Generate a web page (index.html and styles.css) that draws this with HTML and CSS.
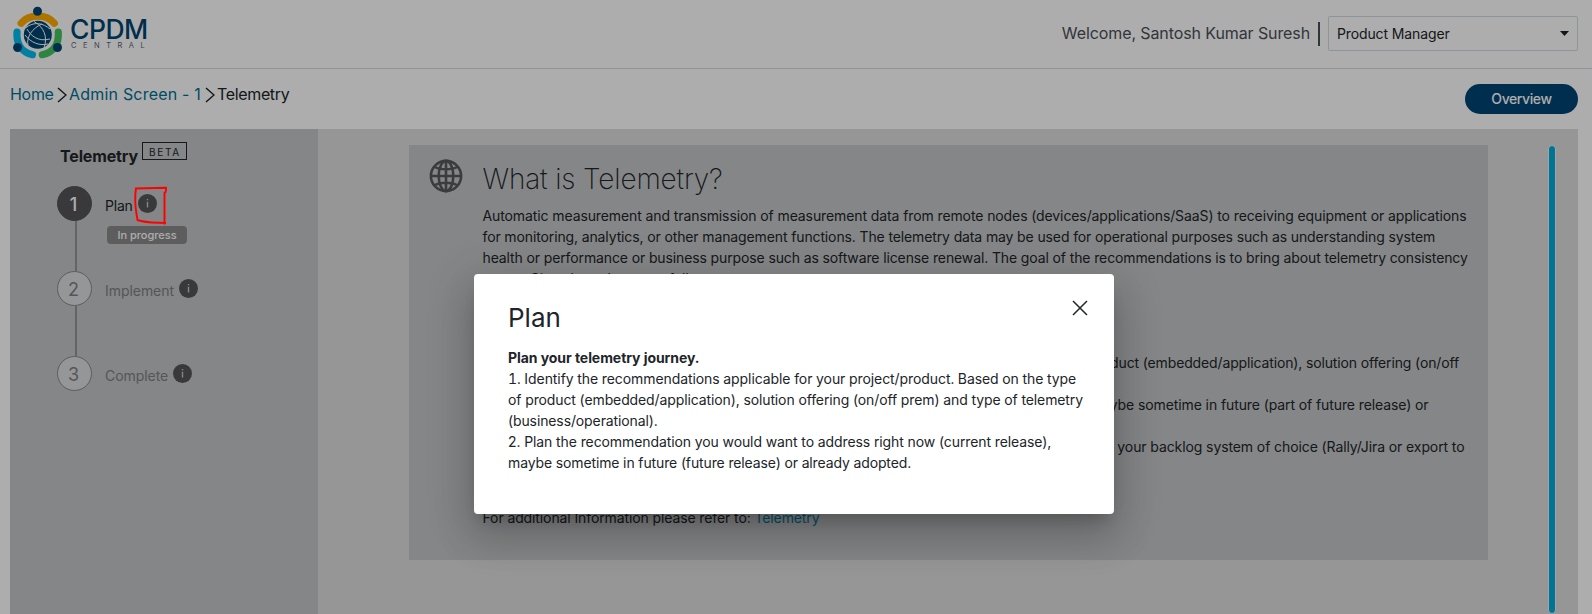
FILE: index.html
```
<!DOCTYPE html>
<html lang="en">
<head>
<meta charset="utf-8">
<title>CPDM Central - Telemetry</title>
<link rel="stylesheet" href="styles.css">
</head>
<body>
<header class="topbar">
  <div class="brand">
    <svg class="brand-mark" width="50" height="54" viewBox="0 0 50 54" fill="none">
      <g stroke-width="7.2" stroke-linecap="round">
        <path d="M8.2 17.2C16 7.8 33.500 7.8 41.300 17.2" stroke="#ffac00"/>
        <path d="M4 26.200C3.200 38.500 9 46.500 19.400 48.700" stroke="#00bff2"/>
        <path d="M45.300 26.200C46 38.500 40.500 46.500 29.300 48.700" stroke="#44c460"/>
      </g>
      <g fill="#004674">
        <circle cx="24.500" cy="5.200" r="4.500"/><circle cx="4.600" cy="41.500" r="4.500"/><circle cx="44.500" cy="41.500" r="4.500"/>
        <circle cx="24.800" cy="28.800" r="14"/>
      </g>
      <g stroke="#fff" stroke-width="1">
        <path d="M12.500 22C21 15 30 17 37 23M21 15.500C31 21 35 31 31 42M29 18C19 22 13 32 15 39M12 29C18 37 27 40 35 38M14 23C18 30 25 36 37 33"/>
      </g>
    </svg>
    <div class="brand-text">
      <span class="brand-name">CPDM</span>
      <span class="brand-sub">CENTRAL</span>
    </div>
  </div>
  <div class="account">
    <span class="welcome">Welcome, Santosh Kumar Suresh</span>
    <span class="divider"></span>
    <div class="select"><span>Product Manager</span>
      <svg width="9" height="5" viewBox="0 0 9 5"><path d="M0 0H9L4.500 5Z" fill="#1e2226"/></svg>
    </div>
  </div>
</header>

<div class="crumb-row">
  <nav class="crumbs">
    <a class="c-home">Home</a>
    <svg width="10" height="16" viewBox="0 0 10 16"><path d="M1 1L9 8L1 15" fill="none" stroke="#212529" stroke-width="1.500"/></svg>
    <a class="c-admin">Admin Screen - 1</a>
    <svg width="10" height="16" viewBox="0 0 10 16"><path d="M1 1L9 8L1 15" fill="none" stroke="#212529" stroke-width="1.500"/></svg>
    <span class="c-here">Telemetry</span>
  </nav>
  <button class="overview">Overview</button>
</div>

<div class="content">
  <aside class="sidebar">
    <div class="side-head"><span class="side-title">Telemetry</span><span class="beta">BETA</span></div>
    <div class="step active">
      <div class="rail"><span class="num">1</span><span class="link"></span></div>
      <div class="step-body">
        <div class="step-label"><span class="l-plan">Plan</span><svg class="info" width="19" height="19" viewBox="0 0 19 19"><circle cx="9.500" cy="9.500" r="9.500" fill="#555558"/><path d="M9.500 7.800V13.500M9.500 5V6.300" stroke="#c4c6c7" stroke-width="1.400"/></svg></div>
        <span class="pill">In progress</span>
      </div>
    </div>
    <div class="step">
      <div class="rail"><span class="num">2</span><span class="link"></span></div>
      <div class="step-body">
        <div class="step-label"><span class="l-impl">Implement</span><svg class="info" width="19" height="19" viewBox="0 0 19 19"><circle cx="9.500" cy="9.500" r="9.500" fill="#555558"/><path d="M9.500 7.800V13.500M9.500 5V6.300" stroke="#c4c6c7" stroke-width="1.400"/></svg></div>
      </div>
    </div>
    <div class="step">
      <div class="rail"><span class="num">3</span></div>
      <div class="step-body">
        <div class="step-label"><span class="l-comp">Complete</span><svg class="info" width="19" height="19" viewBox="0 0 19 19"><circle cx="9.500" cy="9.500" r="9.500" fill="#555558"/><path d="M9.500 7.800V13.500M9.500 5V6.300" stroke="#c4c6c7" stroke-width="1.400"/></svg></div>
      </div>
    </div>
  </aside>
  <main class="main">
    <section class="card">
      <svg class="globe" width="34" height="34" viewBox="0 0 34 34" fill="none" stroke="#58595c" stroke-width="2.600">
        <circle cx="17" cy="17" r="15.100"/><ellipse cx="17" cy="17" rx="7.300" ry="15.100"/>
        <path d="M17 1.500V32.500M1.500 17H32.500M5 7.500C11 11.200 23 11.200 29 7.500M5 26.500C11 22.800 23 22.800 29 26.500"/>
      </svg>
      <div class="article">
        <h1>What is Telemetry?</h1>
        <p>
          <span class="line t1">Automatic measurement and transmission of measurement data from remote nodes (devices/applications/SaaS) to receiving equipment or applications</span>
          <span class="line t2b">for monitoring, analytics, or other management functions. The telemetry data may be used for operational purposes such as understanding system</span>
          <span class="line t3">health or performance or business purpose such as software license renewal. The goal of the recommendations is to bring about telemetry consistency</span>
          <span class="line t2">across Cisco based apps as follows:</span>
        </p>
        <div class="steps-text">
          <span class="line end e1">1. Identify the recommendations applicable for your product. Based on the type of product (embedded/application), solution offering (on/off</span>
          <span class="line t2">prem) and type of telemetry (business/operational).</span>
          <span class="line end e2">2. Plan the recommendation to address right now (current release), maybe sometime in future (part of future release) or</span>
          <span class="line t2">already adopted.</span>
          <span class="line end e3">3. Implement the planned recommendations by adding them to your backlog system of choice (Rally/Jira or export to</span>
          <span class="line t2">a file).</span>
        </div>
        <div class="refer"><span class="line t2">For additional Information please refer to: <a>Telemetry</a></span></div>
      </div>
    </section>
    <div class="scrollbar"></div>
  </main>
</div>

<div class="backdrop">
  <div class="dialog" role="dialog">
    <div class="dialog-head">
      <h2>Plan</h2>
      <svg class="close" width="16" height="16" viewBox="0 0 16 16"><path d="M1 1L15 15M15 1L1 15" stroke="#212529" stroke-width="1.500"/></svg>
    </div>
    <div class="dialog-body">
      <span class="line d0">Plan your telemetry journey.</span>
      <span class="line d1">1. Identify the recommendations applicable for your project/product. Based on the type</span>
      <span class="line d2">of product (embedded/application), solution offering (on/off prem) and type of telemetry</span>
      <span class="line d2">(business/operational).</span>
      <span class="line d3">2. Plan the recommendation you would want to address right now (current release),</span>
      <span class="line d4">maybe sometime in future (future release) or already adopted.</span>
    </div>
  </div>
</div>
<svg class="marker" width="36" height="42" viewBox="0 0 36 42" fill="none" stroke="#ff0000" stroke-width="1.900"><path d="M2 4.500L33 3.700V7.500M3 4C1.500 14 2.500 24 3.500 30L4.500 36C12 39 22 38.500 33 39M33 7.500L31.500 9V40.500"/></svg>
</body>
</html>
```
FILE: styles.css
```
* { box-sizing: border-box; }
body {
  margin: 0;
  width: 1592px;
  height: 614px;
  overflow: hidden;
  position: relative;
  background: #fff;
  color: #212529;
  font: 400 14px/21px Inter, "Liberation Sans", sans-serif;
}
h1, h2, p { margin: 0; }

.topbar {
  height: 69px;
  border-bottom: 1px solid #d2dae1;
  display: flex;
  justify-content: space-between;
  padding: 0 14px 0 13px;
}
.brand { display: flex; gap: 7px; padding-top: 6px; }
.brand-text { display: flex; flex-direction: column; color: #004674; padding-top: 7px; }
.brand-name { font-size: 26.5px; font-weight: 450; line-height: 32px; letter-spacing: -0.5px; }
.brand-sub { font-size: 7.5px; line-height: 8px; letter-spacing: 6.5px; color: #5b6876; margin: -3px 0 0 1px; }
.account { display: flex; align-items: center; height: 67px; white-space: nowrap; }
.welcome { font-size: 16px; letter-spacing: -0.1px; color: #495057; }
.divider { width: 2px; height: 24px; background: #495057; margin: 0 8px; }
.select {
  width: 250px;
  height: 35px;
  border: 1px solid #d2dae1;
  border-radius: 2px;
  padding: 0 8px;
  display: flex;
  align-items: center;
  justify-content: space-between;
  letter-spacing: -0.12px;
}

.crumb-row {
  height: 60px;
  display: flex;
  justify-content: space-between;
  align-items: flex-start;
  padding: 15px 14px 0 10px;
}
.crumbs { display: flex; align-items: center; font-size: 16px; white-space: nowrap; }
.crumbs a { color: #007096; }
.crumbs svg { margin: 0 2px 0 3px; }
.c-home { letter-spacing: -0.3px; width: 44px; }
.c-admin { letter-spacing: 0.2px; width: 133px; }
.c-here { letter-spacing: -0.35px; }
.overview {
  width: 113px;
  height: 30px;
  border: 0;
  border-radius: 15px;
  background: #004574;
  color: #fff;
  font: 500 14px/30px Inter, sans-serif;
  letter-spacing: -0.4px;
  padding: 0;
}

.content { display: flex; height: 485px; margin: 0 14px 0 10px; }
.sidebar { width: 308px; background: #c4c6c7; padding: 13px 0 0 47px; }
.side-head { display: flex; align-items: flex-start; gap: 5px; height: 44px; padding-left: 3px; }
.side-title { font-size: 16px; font-weight: 700; letter-spacing: -0.15px; line-height: 28px; width: 77px; }
.beta {
  width: 45px;
  height: 18px;
  border: 1px solid #212529;
  font-size: 10px;
  line-height: 19px;
  letter-spacing: 1.7px;
  padding-left: 6px;
}
.step { display: flex; height: 85px; gap: 13px; color: #7d7f82; }
.rail { width: 35px; display: flex; flex-direction: column; align-items: center; }
.num {
  width: 35px;
  height: 35px;
  border: 1px solid #88898b;
  border-radius: 50%;
  background: #dcdddf;
  font-size: 18px;
  line-height: 35px;
  padding-right: 2px;
  text-align: center;
}
.link { width: 2px; height: 50px; margin-left: 2px; background: #929497; }
.step-body { padding-top: 5px; }
.step-label { display: flex; align-items: center; height: 27px; }
.step-label span { padding-top: 2px; }
.info { margin: -2px 0 0 6px; }
.l-plan { width: 27px; letter-spacing: -0.2px; }
.l-impl { width: 68px; letter-spacing: -0.05px; }
.l-comp { width: 62px; letter-spacing: -0.05px; }
.active { color: #212529; }
.active .num { background: #555558; border-color: #555558; color: #fff; font-weight: 500; }
.pill {
  display: block;
  width: 80px;
  height: 18px;
  margin: 8px 0 0 2px;
  border-radius: 4px;
  background: #8a8a8a;
  color: #fff;
  font-size: 11px;
  font-weight: 500;
  line-height: 18px;
  text-align: center;
}

.main { flex: 1; display: flex; background: #ddd; padding: 16px 22px 0 91px; justify-content: space-between; }
.card { width: 1079px; height: 415px; background: #c4c6c7; display: flex; padding: 14px 0 0 19.5px; }
.article { padding: 6px 0 0 20px; white-space: nowrap; }
h1 { font-size: 28px; font-weight: 200; line-height: 29px; letter-spacing: -0.14px; height: 40px; }
.line { display: block; white-space: nowrap; }
.t1 { letter-spacing: -0.102px; }
.t2 { letter-spacing: -0.108px; }
.t2b { letter-spacing: -0.125px; }
.t3 { letter-spacing: -0.12px; }
.steps-text { padding-top: 63px; }
.end { text-align: right; }
.e1 { width: 976.5px; letter-spacing: -0.14px; }
.e2 { width: 946px; letter-spacing: -0.1px; }
.e3 { width: 982px; letter-spacing: -0.1px; }
.refer { padding-top: 29px; }
.refer a { color: #0379a2; }
.scrollbar { width: 8px; height: 469px; background: #00abdb; border: 1px solid #f2f2f2; border-radius: 4px; }

/* Modal layer */
.backdrop { position: absolute; inset: 0; background: rgba(0, 0, 0, 0.32); display: flex; justify-content: center; padding-top: 274px; }
.dialog {
  width: 640px;
  height: 240px;
  margin-left: -4px;
  border-radius: 4px;
  background: #fff;
  padding: 26px 26px 0 34px;
  box-shadow: 0 11px 15px -7px rgba(0, 0, 0, 0.2), 0 24px 38px 3px rgba(0, 0, 0, 0.14), 0 9px 46px 8px rgba(0, 0, 0, 0.12);
}
.dialog-head { display: flex; justify-content: space-between; height: 47px; }
h2 { font-size: 26px; font-weight: 400; line-height: 35px; }
.d0 { font-weight: 700; letter-spacing: -0.06px; }
.d1 { letter-spacing: -0.075px; font-variant-numeric: tabular-nums; }
.d2 { letter-spacing: -0.115px; }
.d3 { letter-spacing: -0.1px; }
.d4 { letter-spacing: -0.13px; }
.marker { position: absolute; left: 133px; top: 184px; }
```
